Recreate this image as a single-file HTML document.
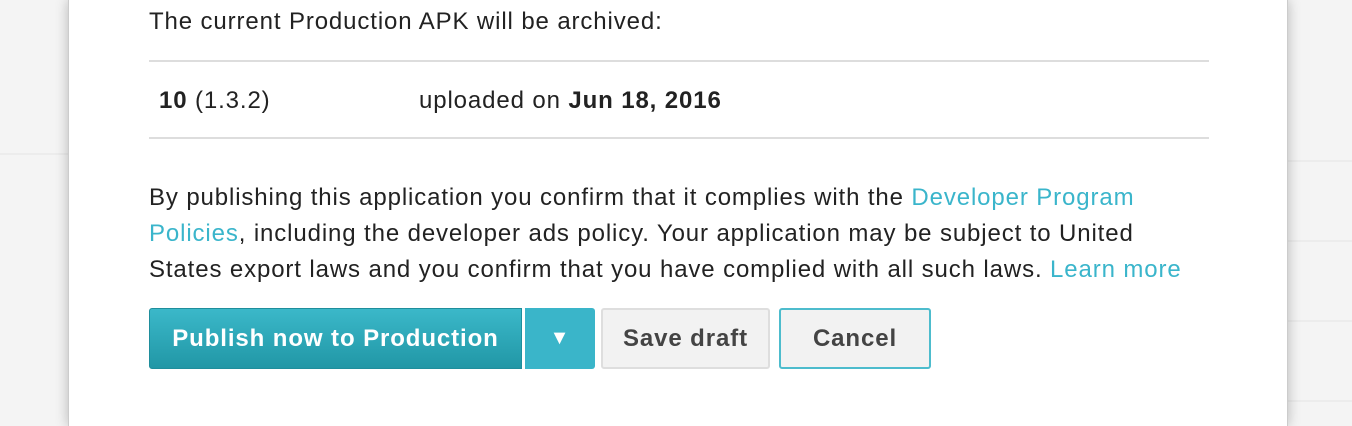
<!DOCTYPE html><html><head><style>
body{margin:0;width:1352px;height:426px;background:#f4f4f4;position:relative;overflow:hidden;font-family:"Liberation Sans",Arial,sans-serif;color:#222}
.hl{position:absolute;height:2px;background:#ececec}
.dlg{position:absolute;left:68px;top:0;width:1220px;height:426px;background:#fff;box-shadow:0 0 12px rgba(0,0,0,.25);border-left:1px solid #ccc;border-right:1px solid #ccc;box-sizing:border-box}
.t{position:absolute;font-size:24px;letter-spacing:0.88px;white-space:nowrap}
.line{position:absolute;left:80px;width:1060px;height:2px;background:#ddd}
a{color:#3ab5cb;text-decoration:none}
.btn{position:absolute;top:308px;height:61px;box-sizing:border-box;border-radius:3px;font-weight:bold;font-size:24px;letter-spacing:0.9px;display:flex;align-items:center;justify-content:center}
</style></head><body>
<div class="hl" style="left:0;width:68px;top:153px"></div>
<div class="hl" style="left:1288px;width:64px;top:160px"></div>
<div class="hl" style="left:1288px;width:64px;top:240px"></div>
<div class="hl" style="left:1288px;width:64px;top:320px"></div>
<div class="hl" style="left:1288px;width:64px;top:400px"></div>
<div class="dlg">
<div class="t" style="left:80px;top:8px">The current Production APK will be archived:</div>
<div class="line" style="top:60px"></div>
<div class="t" style="left:90px;top:87px"><b>10</b> (1.3.2)</div>
<div class="t" style="left:350px;top:87px">uploaded on <b>Jun 18, 2016</b></div>
<div class="line" style="top:137px"></div>
<div class="t" style="left:80px;top:180px;line-height:36px">By publishing this application you confirm that it complies with the <a>Developer Program</a><br><a>Policies</a>, including the developer ads policy. Your application may be subject to United<br>States export laws and you confirm that you have complied with all such laws. <a>Learn more</a></div>
<div class="btn" style="left:80px;width:373px;background:linear-gradient(#3bb8c9,#2197a6);color:#fff;border:1px solid #1f8e9c;border-radius:3px 0 0 3px">Publish now to Production</div>
<div class="btn" style="left:456px;width:70px;background:#3ab5c9;color:#fff;border-radius:0 3px 3px 0;font-size:20px">▼</div>
<div class="btn" style="left:532px;width:169px;background:#f2f2f2;border:2px solid #dedede;color:#444">Save draft</div>
<div class="btn" style="left:710px;width:152px;background:#f2f2f2;border:2px solid #4dbccd;color:#444">Cancel</div>
</div>
</body></html>
